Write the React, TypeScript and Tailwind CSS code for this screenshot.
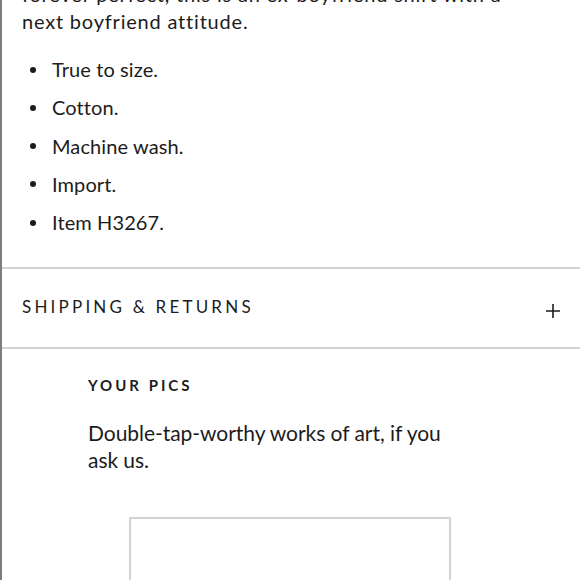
import React from 'react';

const items = ['True to size.', 'Cotton.', 'Machine wash.', 'Import.', 'Item H3267.'];

export default function App() {
  return (
    <div
      className="w-[580px] h-[580px] overflow-hidden bg-white border-l-2 border-[#7d7d7d] text-[#1c1c1c]"
      style={{ fontFamily: 'Lato, "Noto Sans", sans-serif' }}
    >
      {/* Description */}
      <div className="pl-[20px] pr-4">
        <p className="mt-[-19px] text-[20px] leading-[27px] tracking-[0.8px] whitespace-nowrap">
          forever perfect, this is an ex-boyfriend shirt with a
          <br />
          next boyfriend attitude.
        </p>
        <ul className="mt-[21px] flex flex-col gap-[11.25px]">
          {items.map((item) => (
            <li key={item} className="flex items-center text-[20px] leading-[27px] tracking-[0.1px]">
              <span className="ml-[8px] mr-[16px] w-[6px] h-[6px] rounded-full bg-[#1c1c1c]" />
              {item}
            </li>
          ))}
        </ul>
      </div>

      {/* Shipping */}
      <div className="mt-[31px] border-t-2 border-b-2 border-[#d3d3d3] h-[82px] pl-[20px] pr-[20px] flex items-center justify-between">
        <span className="text-[17px] tracking-[3.2px] mt-[-2px]">SHIPPING &amp; RETURNS</span>
        <svg width="14" height="14" viewBox="0 0 14 14" className="mt-[6px]">
          <path d="M7 0v14M0 7h14" stroke="#1c1c1c" strokeWidth="1.6" />
        </svg>
      </div>

      {/* Your pics */}
      <div className="pl-[86px] pr-[100px] pt-[26px]">
        <h3 className="text-[15px] font-bold tracking-[3px] leading-[20px]">YOUR PICS</h3>
        <p className="mt-[24px] text-[21px] leading-[27px] tracking-[-0.05px] whitespace-nowrap">
          Double-tap-worthy works of art, if you
          <br />
          ask us.
        </p>
        <div className="mt-[44px] ml-[41px] w-[322px] h-[200px] border-2 border-[#d3d3d3]" />
      </div>
    </div>
  );
}
